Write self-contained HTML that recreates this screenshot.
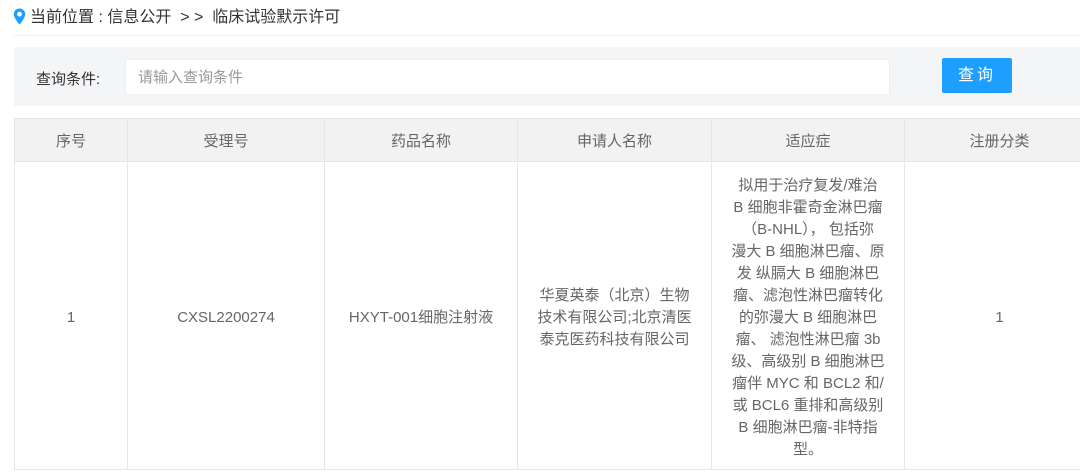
<!DOCTYPE html>
<html><head><meta charset="utf-8"><style>
*{margin:0;padding:0;box-sizing:border-box}
body{width:1080px;height:474px;background:#fff;font-family:"Liberation Sans","Noto Sans CJK SC",sans-serif;color:#555;overflow:hidden;position:relative}
.bc{position:absolute;left:13px;top:7px;font-size:16px;color:#333;line-height:22px}
.bc svg{vertical-align:-3px;margin-right:4px}
.hr{position:absolute;left:14px;right:0;top:35px;height:1px;background:#eee}
.sb{position:absolute;left:14px;right:0;top:47px;height:59px;background:#f4f5f7}
.lab{position:absolute;left:36px;top:68px;font-size:15px;color:#333}
.inp{position:absolute;left:125px;top:59px;width:765px;height:36px;background:#fff;border:1px solid #eceef1;border-radius:3px;font-size:15px;color:#999;padding:8px 12px;line-height:20px}
.btn{position:absolute;left:942px;top:58px;width:70px;height:35px;background:#1e9fff;border-radius:2px;color:#fff;font-size:16px;text-align:center;line-height:35px;letter-spacing:3px}
table{position:absolute;left:14px;top:118px;border-collapse:collapse;width:1080px;table-layout:fixed}
td,th{border:1px solid #e6e6e6;text-align:center;font-size:15px;color:#666;font-weight:normal}
th{background:#f2f2f2;height:43px}
td{height:308px;line-height:22px;padding:5px 8px 0}
</style></head><body>
<div class="bc"><svg width="13" height="17" viewBox="0 0 13 17"><path d="M6.5 0.5C3.2 0.5 0.8 3 0.8 6.2c0 4 5.7 10.3 5.7 10.3s5.7-6.3 5.7-10.3C12.2 3 9.8 0.5 6.5 0.5z" fill="#1e9fff"/><circle cx="6.5" cy="6.2" r="2.4" fill="#fff"/></svg>当前位置 : 信息公开 &nbsp;&gt; &gt;&nbsp; 临床试验默示许可</div>
<div class="hr"></div>
<div class="sb"></div>
<div class="lab">查询条件:</div>
<div class="inp">请输入查询条件</div>
<div class="btn">查询</div>
<table>
<colgroup><col style="width:113px"><col style="width:197px"><col style="width:193px"><col style="width:194px"><col style="width:193px"><col style="width:190px"></colgroup>
<tr><th>序号</th><th>受理号</th><th>药品名称</th><th>申请人名称</th><th>适应症</th><th>注册分类</th></tr>
<tr><td>1</td><td>CXSL2200274</td><td>HXYT-001细胞注射液</td><td>华夏英泰（北京）生物<br>技术有限公司;北京清医<br>泰克医药科技有限公司</td><td>拟用于治疗复发/难治<br>B 细胞非霍奇金淋巴瘤<br>（B-NHL）， 包括弥<br>漫大 B 细胞淋巴瘤、原<br>发 纵膈大 B 细胞淋巴<br>瘤、滤泡性淋巴瘤转化<br>的弥漫大 B 细胞淋巴<br>瘤、 滤泡性淋巴瘤 3b<br>级、高级别 B 细胞淋巴<br>瘤伴 MYC 和 BCL2 和/<br>或 BCL6 重排和高级别<br>B 细胞淋巴瘤-非特指<br>型。</td><td>1</td></tr>
</table>
</body></html>
